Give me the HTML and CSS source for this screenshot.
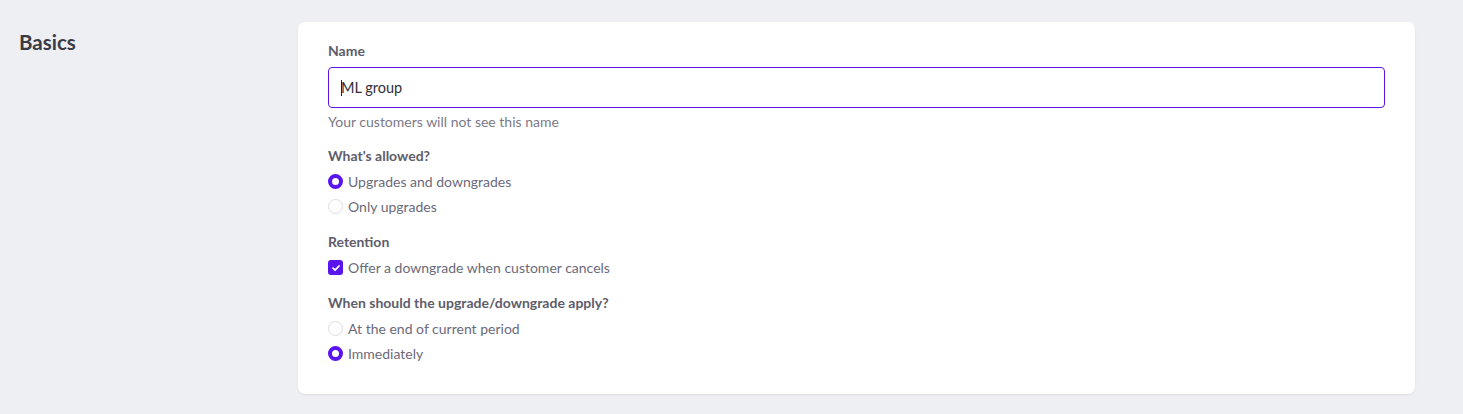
FILE: index.html
```html
<!DOCTYPE html>
<html lang="en">
<head>
    <meta charset="UTF-8">
    <meta name="viewport" content="width=device-width, initial-scale=1.0">
    <title>Basics</title>
    <link rel="stylesheet" href="styles.css">
</head>
<body>
    <div class="section">
        <div class="section-title">Basics</div>

        <div class="card">
            <div class="form-group">
                <label class="label" for="groupName">Name</label>
                <div class="input"><span class="caret"></span>ML group</div>
                <div class="help">Your customers will not see this name</div>
            </div>

            <div class="form-group">
                <div class="label">What's allowed?</div>
                <div class="option"><span class="radio checked"></span>Upgrades and downgrades</div>
                <div class="option"><span class="radio"></span>Only upgrades</div>
            </div>

            <div class="form-group">
                <div class="label">Retention</div>
                <div class="option">
                    <span class="checkbox">
                        <svg width="10" height="10" viewBox="0 0 10 10"><path d="M2 5.2 L4.1 7.2 L8 3" fill="none" stroke="#fff" stroke-width="1.8" stroke-linecap="round" stroke-linejoin="round"/></svg>
                    </span>Offer a downgrade when customer cancels
                </div>
            </div>

            <div class="form-group">
                <div class="label">When should the upgrade/downgrade apply?</div>
                <div class="option"><span class="radio"></span>At the end of current period</div>
                <div class="option"><span class="radio checked"></span>Immediately</div>
            </div>
        </div>
    </div>
</body>
</html>
```

FILE: styles.css
```css
body {
    margin: 0;
    background-color: #eeeff3;
    font-family: "Lato", "Open Sans", sans-serif;
    color: #6b6a7a;
}
.section {
    display: flex;
    padding: 22px 48px 21px 19px;
}
.section-title {
    width: 279px;
    flex-shrink: 0;
    font-size: 20.5px;
    font-weight: 700;
    color: #3b3b45;
    line-height: 40px;
}
.card {
    flex: 1;
    background: #ffffff;
    border-radius: 7px;
    box-shadow: 0 1px 2px rgba(0, 0, 0, 0.08);
    padding: 20px 30px 28px 30px;
}
.form-group {
    margin-top: 14px;
}
.form-group:first-child {
    margin-top: 0;
}
.label {
    display: block;
    font-size: 14px;
    font-weight: 700;
    line-height: 18px;
    color: #5e5d6b;
    margin-bottom: 4px;
}
.form-group:first-child .label {
    margin-bottom: 7px;
}
.input {
    height: 39px;
    border: 1px solid #5a14ee;
    border-radius: 4px;
    padding: 0 12px;
    display: flex;
    align-items: center;
    font-size: 14.5px;
    color: #2f2e3a;
}
.caret {
    width: 1px;
    height: 16px;
    background: #222;
    margin-right: -1px;
}
.help {
    font-size: 14px;
    line-height: 18px;
    margin-top: 5px;
    margin-bottom: 16px;
    color: #7b7a88;
}
.option {
    display: flex;
    align-items: center;
    height: 25px;
    font-size: 14px;
    color: #6b6a7a;
}
.radio {
    border: 1px solid #dcdce2;
    border-radius: 50%;
    margin-right: 5px;
    box-sizing: border-box;
    width: 15px;
    height: 15px;
}
.radio.checked {
    border: 4px solid #5a14ee;
    background: #fff;
}
.checkbox {
    width: 15px;
    height: 15px;
    border-radius: 3px;
    background: #5a14ee;
    margin-right: 5px;
    display: flex;
    align-items: center;
    justify-content: center;
}
```
